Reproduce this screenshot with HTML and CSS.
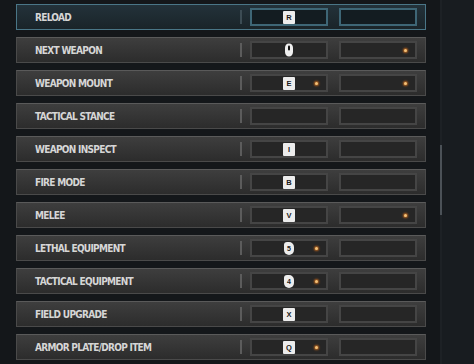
FILE: index.html
```html
<html lang="en">
<head>
    <meta charset="UTF-8">
    <title>Keybinds</title>
    <link rel="stylesheet" href="styles.css">
</head>
<body>
    <div id="screen">
        <div id="binds">
            <div class="row selected">
                <span class="label">RELOAD</span><span class="divider"></span>
                <div class="slot"><span class="key">R</span></div>
                <div class="slot"></div>
            </div>
            <div class="row">
                <span class="label">NEXT WEAPON</span><span class="divider"></span>
                <div class="slot">
                    <svg class="mouse" width="10" height="14" viewBox="0 0 10 14"><path d="M5 0.5C2.3 0.5 1 2.5 1 5v4c0 2.6 1.6 4.5 4 4.5s4-1.9 4-4.5V5C9 2.5 7.7 0.5 5 0.5z" fill="#eee"/><rect x="4" y="2.5" width="2" height="5" rx="1" fill="#111"/></svg>
                </div>
                <div class="slot"><span class="dot"></span></div>
            </div>
            <div class="row">
                <span class="label">WEAPON MOUNT</span><span class="divider"></span>
                <div class="slot"><span class="key">E</span><span class="dot"></span></div>
                <div class="slot"><span class="dot"></span></div>
            </div>
            <div class="row">
                <span class="label">TACTICAL STANCE</span><span class="divider"></span>
                <div class="slot"></div>
                <div class="slot"></div>
            </div>
            <div class="row">
                <span class="label">WEAPON INSPECT</span><span class="divider"></span>
                <div class="slot"><span class="key">I</span></div>
                <div class="slot"></div>
            </div>
            <div class="row">
                <span class="label">FIRE MODE</span><span class="divider"></span>
                <div class="slot"><span class="key">B</span></div>
                <div class="slot"></div>
            </div>
            <div class="row">
                <span class="label">MELEE</span><span class="divider"></span>
                <div class="slot"><span class="key">V</span></div>
                <div class="slot"><span class="dot"></span></div>
            </div>
            <div class="row">
                <span class="label">LETHAL EQUIPMENT</span><span class="divider"></span>
                <div class="slot"><span class="side">5</span><span class="dot"></span></div>
                <div class="slot"></div>
            </div>
            <div class="row">
                <span class="label">TACTICAL EQUIPMENT</span><span class="divider"></span>
                <div class="slot"><span class="side">4</span><span class="dot"></span></div>
                <div class="slot"></div>
            </div>
            <div class="row">
                <span class="label">FIELD UPGRADE</span><span class="divider"></span>
                <div class="slot"><span class="key">X</span></div>
                <div class="slot"></div>
            </div>
            <div class="row">
                <span class="label">ARMOR PLATE/DROP ITEM</span><span class="divider"></span>
                <div class="slot"><span class="key">Q</span><span class="dot"></span></div>
                <div class="slot"></div>
            </div>
        </div>
        <div id="track"><div class="thumb"></div></div>
        <div id="side-panel"></div>
    </div>
</body>
</html>
```

FILE: styles.css
```css
body {
    margin: 0;
    background-color: #14171a;
    font-family: "DejaVu Sans Condensed", "DejaVu Sans", sans-serif;
    overflow: hidden;
}
#screen {
    display: flex;
    height: 364px;
}
#binds {
    width: 410px;
    margin-left: 16px;
    padding-top: 4px;
    display: flex;
    flex-direction: column;
    gap: 7px;
}
.row {
    height: 26px;
    box-sizing: border-box;
    display: flex;
    align-items: center;
    border: 1px solid #4a4a4a;
    border-top-color: #5a5a5a;
    background: linear-gradient(#3e3e3e, #2c2c2c);
    padding-right: 8px;
}
.row.selected {
    border: 1px solid #4a7687;
    background: linear-gradient(#23323a, #1a2429);
}
.label {
    flex: 1;
    padding-left: 18px;
    color: #d6d6d6;
    font-size: 10px;
    font-weight: bold;
    letter-spacing: -0.7px;
}
.divider {
    width: 2px;
    height: 14px;
    background-color: #5c5c5c;
    margin-right: 8px;
}
.selected .divider {
    background-color: #3c4c54;
}
.slot {
    position: relative;
    width: 78px;
    height: 18px;
    box-sizing: border-box;
    margin-left: 11px;
    border: 2px solid #454545;
    background-color: #262626;
    display: flex;
    align-items: center;
    justify-content: center;
}
.divider + .slot {
    margin-left: 0;
}
.selected .slot {
    border-color: #3e6676;
    background-color: #131c21;
}
.key {
    width: 12px;
    height: 13px;
    background-color: #ececec;
    border-radius: 1px;
    color: #1a1a1a;
    font-family: "Liberation Sans", sans-serif;
    font-size: 7.5px;
    font-weight: bold;
    display: flex;
    align-items: center;
    justify-content: center;
}
.side {
    width: 10px;
    height: 13px;
    background-color: #ececec;
    border-radius: 3px 5px 5px 5px;
    color: #1a1a1a;
    font-family: "Liberation Sans", sans-serif;
    font-size: 7px;
    font-weight: bold;
    display: flex;
    align-items: center;
    justify-content: center;
}
.dot {
    position: absolute;
    right: 8px;
    top: 6px;
    width: 3px;
    height: 3px;
    border-radius: 50%;
    background-color: #f2c27a;
    box-shadow: 0 0 2px 1px #b8641e;
}
#track {
    width: 2px;
    margin-left: 14px;
    background-color: #1d2125;
    position: relative;
}
.thumb {
    position: absolute;
    top: 145px;
    left: 0;
    width: 2px;
    height: 70px;
    background-color: #4b5157;
}
#side-panel {
    flex: 1;
    background-color: #181c20;
}
```
